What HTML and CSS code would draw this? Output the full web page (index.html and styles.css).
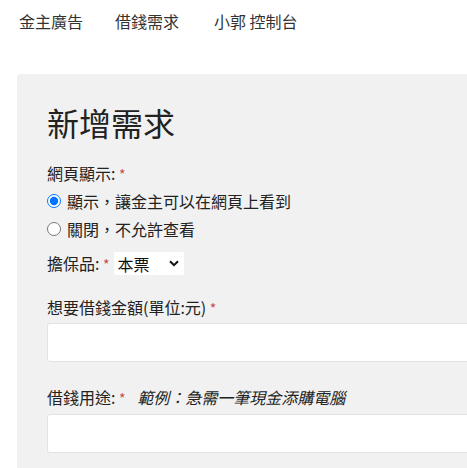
FILE: index.html
```html
<!DOCTYPE html>
<html lang="zh-Hant">
<head>
<meta charset="utf-8">
<title>新增需求</title>
<link rel="stylesheet" href="styles.css">
</head>
<body>
<nav class="topnav">
  <a class="nav-link" href="#">金主廣告</a>
  <a class="nav-link" href="#">借錢需求</a>
  <a class="nav-link nav-last" href="#">小郭 控制台</a>
</nav>
<main class="panel">
  <h1 class="title">新增需求</h1>
  <form class="form">
    <div class="field-label first">網頁顯示: <span class="req">*</span></div>
    <label class="radio-row"><input type="radio" name="show" class="radio" checked> 顯示，讓金主可以在網頁上看到</label>
    <label class="radio-row"><input type="radio" name="show" class="radio"> 關閉，不允許查看</label>
    <div class="select-row">
      <span class="inline-label">擔保品: <span class="req">*</span></span>
      <span class="select-wrap">
        <select class="select">
          <option>本票</option>
        </select>
        <svg class="chevron" width="10" height="7" viewBox="0 0 10 7"><path d="M1 1.2 L5 5.2 L9 1.2" fill="none" stroke="#111" stroke-width="2"/></svg>
      </span>
    </div>
    <div class="field-label amount">想要借錢金額(單位:元) <span class="req">*</span></div>
    <input class="text-input first-input" type="text">
    <div class="field-label purpose">借錢用途: <span class="req">*</span> <em class="hint">範例：急需一筆現金添購電腦</em></div>
    <input class="text-input second-input" type="text">
  </form>
</main>
</body>
</html>
```

FILE: styles.css
```css
html, body {
  margin: 0;
  padding: 0;
  overflow: hidden;
  background: #fff;
}
body {
  font-family: "Noto Sans CJK TC", "Noto Sans", sans-serif;
  font-size: 16px;
  color: #222;
}
.topnav {
  display: flex;
  height: 42px;
  align-items: center;
  padding-left: 3px;
}
.nav-link {
  padding: 0 16px;
  line-height: 42px;
  color: #333;
  text-decoration: none;
}
.nav-last {
  margin-left: 3px;
}
.panel {
  margin: 32px 0 0 17px;
  width: 620px;
  min-height: 420px;
  background: #f1f1f1;
  border-radius: 4px;
  padding: 28px 30px 0;
  box-sizing: border-box;
}
.title {
  margin: 0 0 17px;
  font-size: 32px;
  line-height: 40px;
  font-weight: normal;
  color: #222;
}
.form {
  display: flex;
  flex-direction: column;
}
.field-label {
  line-height: 28px;
  height: 28px;
}
.req {
  color: #c9484a;
  font-size: 14px;
}
.radio-row {
  display: flex;
  align-items: center;
  height: 28px;
}
.radio {
  margin: 0 6px 0 0;
  width: 14px;
  height: 14px;
}
.select-row {
  display: flex;
  align-items: center;
  height: 28px;
  margin-top: 6px;
}
.inline-label {
  margin-right: 4px;
}
.select-wrap {
  position: relative;
  display: inline-flex;
}
.select {
  appearance: none;
  -webkit-appearance: none;
  border: none;
  background: #fff;
  font-family: inherit;
  font-size: 16px;
  color: #111;
  width: 70px;
  height: 23px;
  padding: 0 4px;
  border-radius: 2px;
  outline: none;
}
.chevron {
  position: absolute;
  right: 5px;
  top: 8px;
  pointer-events: none;
}
.amount {
  margin-top: 16px;
}
.purpose {
  margin-top: 21px;
}
.hint {
  margin-left: 8px;
  font-style: italic;
}
.text-input {
  width: 100%;
  height: 39px;
  box-sizing: border-box;
  border: 1px solid #e2e2e2;
  border-radius: 3px;
  background: #fff;
  font-family: inherit;
  font-size: 16px;
}
.first-input {
  margin-top: 2px;
}
.second-input {
  margin-top: 3px;
}
```
